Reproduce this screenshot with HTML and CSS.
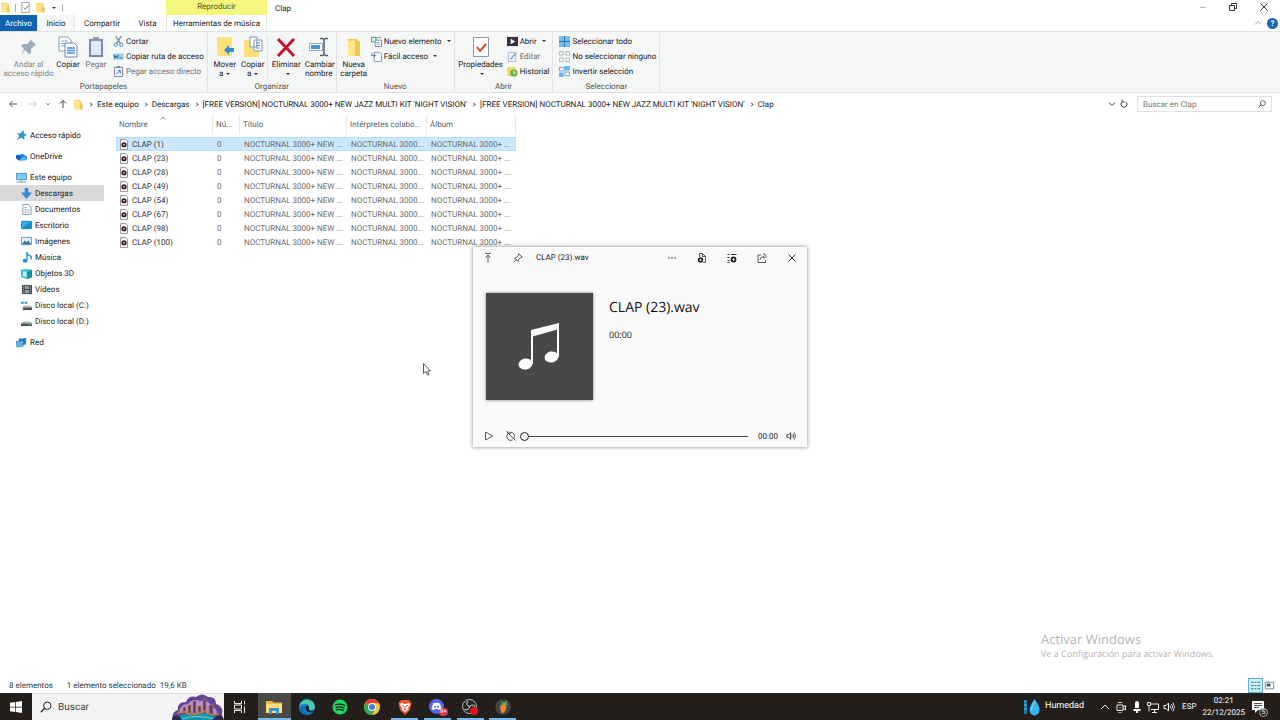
FILE: index.html
```html
<!DOCTYPE html>
<html lang="es">

<head>
  <meta charset="UTF-8">
  <title>Clap</title>
  <link rel="stylesheet" href="styles.css">
</head>

<body>

  <!-- shared icons -->
  <svg class="defs" aria-hidden="true">
    <symbol id="folder" viewBox="0 0 16 16">
      <path d="M2 1h8l1 2h2v12H2z" fill="#f6d560" />
      <path d="M2 3l8-1v13H2z" fill="#ffe68a" />
      <path d="M10 8h4v7h-4z" fill="#eec64a" />
    </symbol>
    <symbol id="pages" viewBox="0 0 20 22">
      <path d="M1 1h9l3 3v11H1z" fill="#fff" stroke="#8a9dbb" />
      <path d="M3 5h7M3 7.500h7M3 10h7" stroke="#7fa9de" />
      <path d="M7 7h9l3 3v11H7z" fill="#fff" stroke="#7087ad" />
      <path d="M9 12h8M9 14.500h8M9 17h8" stroke="#4f8edb" stroke-width="1.500" />
    </symbol>
    <symbol id="wav" viewBox="0 0 9 12">
      <path d="M.5.5h6l2 2v9h-8z" fill="#fff" stroke="#85808a" />
      <circle cx="4.500" cy="6.300" r="2.900" fill="#2a1720" />
      <circle cx="4.500" cy="6.300" r="1.100" fill="#e8b7c0" />
    </symbol>
    <symbol id="screen" viewBox="0 0 12 12">
      <path d="M.5 1.500h11v8H.5z" fill="#2fb1ee" stroke="#2187bd" />
      <path d="M1 9L11 2v7z" fill="#1787d6" />
    </symbol>
    <symbol id="drive" viewBox="0 0 12 12">
      <path d="M2 6h8l2 2H0z" fill="#b9bec1" />
      <path d="M0 8h12v3H0z" fill="#50565a" />
      <path d="M9 9.500h2" stroke="#7ee08a" />
    </symbol>
    <symbol id="speaker" viewBox="0 0 12 12">
      <path d="M1 4.500h2L5.500 2v8L3 7.500H1z" fill="none" stroke="currentColor" />
      <path d="M7 4.500q1 1.500 0 3M8.500 3q2.200 3 0 6M10 1.500q3 4.500 0 9" fill="none" stroke="currentColor" stroke-width=".8" />
    </symbol>
    <symbol id="lens" viewBox="0 0 12 12">
      <circle cx="7.300" cy="4.700" r="3.700" fill="none" stroke="currentColor" />
      <path d="M4.700 7.300L.8 11.200" stroke="currentColor" stroke-width="1.300" />
    </symbol>
    <symbol id="close" viewBox="0 0 10 10">
      <path d="M1.500 1.500l7 7M8.500 1.500l-7 7" stroke="currentColor" stroke-width=".9" />
    </symbol>
  </svg>

  <div class="explorer">
    <header class="titlebar">
      <div class="quick">
        <svg class="i11"><use href="#folder" /></svg>
        <span class="bar"></span>
        <svg class="i11" viewBox="0 0 12 12"><path d="M2 .5h8v11H2z" fill="#fff" stroke="#9a9a9a" /><path d="M4 6l2 2 3-4" fill="none" stroke="#666" /></svg>
        <svg class="i11"><use href="#folder" /></svg>
        <span class="caret"></span>
        <span class="bar"></span>
      </div>
      <div class="context">Reproducir</div>
      <div class="wtitle">Clap</div>
      <div class="winbuttons">
        <button aria-label="Minimizar"><svg class="i10" viewBox="0 0 10 10"><path d="M2 5.500h6" stroke="#bbb" /></svg></button>
        <button aria-label="Restaurar"><svg class="i10" viewBox="0 0 10 10"><path d="M1.500 3.500h5v5h-5zM3.500 3.500v-2h5v5h-2" fill="none" stroke="#333" /></svg></button>
        <button aria-label="Cerrar"><svg class="i10"><use href="#close" /></svg></button>
      </div>
    </header>

    <nav class="tabs">
      <button class="tab file">Archivo</button>
      <button class="tab active">Inicio</button>
      <button class="tab share">Compartir</button>
      <button class="tab view">Vista</button>
      <button class="tab music">Herramientas de música</button>
      <div class="help">
        <svg class="i8" viewBox="0 0 8 8"><path d="M1 5.500l3-3 3 3" fill="none" stroke="#aaa" /></svg>
        <button class="question" aria-label="Ayuda">?</button>
      </div>
    </nav>

    <section class="ribbon">
      <div class="group">
        <div class="tools">
          <button class="big wide off">
            <svg viewBox="0 0 20 22"><path d="M11 3l6 6-2 1-3 3v4l-2 1-4-4-4 5 3-6-3-3 2-2h4l3-3z" fill="#9eabb8" /></svg>
            Andar al<br>acceso rápido
          </button>
          <button class="big"><svg><use href="#pages" /></svg>Copiar</button>
          <button class="big dim">
            <svg viewBox="0 0 20 22"><path d="M3 3h14v18H3z" fill="#7789b0" /><path d="M5 5h10v14H5z" fill="#dfe9fa" /><path d="M7 1h6v4H7z" fill="#939ba8" /></svg>
            Pegar
          </button>
          <div class="small">
            <button><svg viewBox="0 0 12 12"><path d="M3 0l5 8M9 0L4 8" stroke="#70879b" stroke-width="1.300" /><circle cx="3" cy="9.500" r="1.800" fill="none" stroke="#2e7fc7" /><circle cx="9" cy="9.500" r="1.800" fill="none" stroke="#2e7fc7" /></svg>Cortar</button>
            <button><svg viewBox="0 0 12 12"><path d="M0 2.500h12v7H0z" fill="#a7d5f4" /><path d="M1 4l1 4 1.500-3L5 8l1-4M7 7.500h3" fill="none" stroke="#24537e" /></svg>Copiar ruta de acceso</button>
            <button class="dim"><svg viewBox="0 0 12 12"><path d="M1.500 1.500h9v10h-9z" fill="#eef3fc" stroke="#6f83ac" /><path d="M4 0h4v2H4z" fill="#8791a5" /><path d="M4 9l4-4M5 5h3v3" fill="none" stroke="#5570a5" /></svg>Pegar acceso directo</button>
          </div>
        </div>
        <div class="caption">Portapapeles</div>
      </div>

      <div class="group">
        <div class="tools">
          <button class="big">
            <svg viewBox="0 0 20 22"><path d="M2 1h15v19H2z" fill="#ffe17a" /><path d="M19 12h-5V9l-5 5 5 5v-3h5z" fill="#3290cf" /></svg>
            Mover<br>a<span class="caret"></span>
          </button>
          <button class="big">
            <svg viewBox="0 0 20 22"><path d="M1 4h15v17H1z" fill="#ffe17a" /><path d="M7 1h7v10H7zM11 4h8v11h-8z" fill="#fff" stroke="#8293b5" /><path d="M13 7h4M13 9.500h4M13 12h4" stroke="#5c93d8" /></svg>
            Copiar<br>a<span class="caret"></span>
          </button>
          <button class="big delete">
            <svg viewBox="0 0 20 22"><path d="M2 3l16 17M18 3L2 20" stroke="#c4122d" stroke-width="3" /></svg>
            Eliminar<br><span class="caret"></span>
          </button>
          <button class="big">
            <svg viewBox="0 0 20 22"><path d="M.5 7.500h13v7H.5z" fill="#fff" stroke="#9aa9b5" /><path d="M2 9h9v4H2z" fill="#3796dd" /><path d="M11 2.500h2.500l1.500 1 1.500-1H19M11 19.500h2.500l1.500-1 1.500 1H19M15 3v16" fill="none" stroke="#555e68" stroke-width="1.500" /></svg>
            Cambiar<br>nombre
          </button>
        </div>
        <div class="caption">Organizar</div>
      </div>

      <div class="group">
        <div class="tools">
          <button class="big">
            <svg viewBox="0 0 20 22"><path d="M4 3h9l1 2h2v15H4z" fill="#f0ca4c" /><path d="M4 5l7-1v16H4z" fill="#ffe68a" /></svg>
            Nueva<br>carpeta
          </button>
          <div class="small">
            <button><svg viewBox="0 0 12 12"><path d="M.5 1.500h5v5h-5z" fill="#e6f3ef" stroke="#45907c" /><path d="M6 1.500h5M4.500 4.500h7v7h-7z" fill="#fff" stroke="#73879a" /><path d="M6 7h4M6 9h4" stroke="#7aaedd" /></svg>Nuevo elemento<span class="caret"></span></button>
            <button><svg viewBox="0 0 12 12"><path d="M3.500 1.500h6l2 2v8h-8z" fill="#fff" stroke="#8290a8" /><path d="M0 5h5M3 3l2 2-2 2M1 2v2" fill="none" stroke="#5479ad" /></svg>Fácil acceso<span class="caret"></span></button>
          </div>
        </div>
        <div class="caption">Nuevo</div>
      </div>

      <div class="group">
        <div class="tools">
          <button class="big props">
            <svg viewBox="0 0 20 22"><path d="M2.500 1.500h15v19h-15z" fill="#fff" stroke="#8e959d" /><path d="M6 11l3 4 6-7" fill="none" stroke="#d7472c" stroke-width="2" /></svg>
            Propiedades<br><span class="caret"></span>
          </button>
          <div class="small">
            <button><svg viewBox="0 0 12 12"><path d="M0 1h12v10H0z" fill="#3b3042" /><path d="M4 3l5 3-5 3z" fill="#fff" /></svg>Abrir<span class="caret"></span></button>
            <button class="dim"><svg viewBox="0 0 12 12"><path d="M1.500 1.500h8v10h-8z" fill="#f1f4fb" stroke="#a9b8d4" /><path d="M4 9l6-7" stroke="#8fa8d6" stroke-width="2" /></svg>Editar</button>
            <button><svg viewBox="0 0 12 12"><path d="M0 1h9v10H0z" fill="#f4db62" /><circle cx="7.500" cy="7.500" r="4" fill="#66b24a" /><path d="M7.500 5v3h2" fill="none" stroke="#fff" /></svg>Historial</button>
          </div>
        </div>
        <div class="caption">Abrir</div>
      </div>

      <div class="group">
        <div class="tools">
          <div class="small">
            <button><svg viewBox="0 0 12 12"><path d="M0 0h12v12H0z" fill="#76bdf0" /><path d="M6 0v12M0 6h12" stroke="#226fa8" /></svg>Seleccionar todo</button>
            <button><svg viewBox="0 0 12 12"><path d="M.5.5h4v4h-4zM7.500.5h4v4h-4zM.5 7.500h4v4h-4zM7.500 7.500h4v4h-4z" fill="none" stroke="#b7b7b7" /></svg>No seleccionar ninguno</button>
            <button><svg viewBox="0 0 12 12"><path d="M.5 1.500h5v4h-5zM6.500 6.500h5v4h-5z" fill="#fff" stroke="#5a9bcc" /><path d="M6 0h6v5H6zM0 7h5v5H0z" fill="#69b5ec" /></svg>Invertir selección</button>
          </div>
        </div>
        <div class="caption">Seleccionar</div>
      </div>
    </section>

    <div class="address">
      <div class="arrows">
        <button aria-label="Atrás"><svg class="i10" viewBox="0 0 10 10"><path d="M9 5H1.500M4.500 2l-3 3 3 3" fill="none" stroke="#555" /></svg></button>
        <button aria-label="Adelante"><svg class="i10" viewBox="0 0 10 10"><path d="M1 5h7.500M5.500 2l3 3-3 3" fill="none" stroke="#ccc" /></svg></button>
        <button class="recent" aria-label="Recientes"><svg class="i8" viewBox="0 0 8 8"><path d="M2 3l2 2 2-2" fill="none" stroke="#888" /></svg></button>
        <button aria-label="Subir"><svg class="i10" viewBox="0 0 10 10"><path d="M5 9V1.500M2 4.500l3-3 3 3" fill="none" stroke="#444" /></svg></button>
      </div>
      <div class="crumbs">
        <svg class="i11"><use href="#folder" /></svg>
        <i></i><a href="#">Este equipo</a>
        <i></i><a href="#">Descargas</a>
        <i></i><a href="#">[FREE VERSION] NOCTURNAL 3000+ NEW JAZZ MULTI KIT 'NIGHT VISION'</a>
        <i></i><a href="#">[FREE VERSION] NOCTURNAL 3000+ NEW JAZZ MULTI KIT 'NIGHT VISION'</a>
        <i></i><a href="#">Clap</a>
      </div>
      <button class="drop" aria-label="Ubicaciones anteriores"><svg class="i8" viewBox="0 0 8 8"><path d="M1 2.500l3 3 3-3" fill="none" stroke="#444" /></svg></button>
      <button class="reload" aria-label="Actualizar"><svg class="i10" viewBox="0 0 10 10"><path d="M3 3a3 3 0 1 0 4 0M3 .5V3h2.500" fill="none" stroke="#444" /></svg></button>
      <label class="search">
        <input type="text" placeholder="Buscar en Clap" aria-label="Buscar en Clap">
        <svg class="i8"><use href="#lens" /></svg>
      </label>
    </div>

    <main class="content">
      <ul class="tree">
        <li class="root"><a href="#"><svg viewBox="0 0 12 12"><path d="M8 0l1 4 3 1-3 2v4L6 8.500 2 10l1.500-3.500L1 4l4-.5z" fill="#2d96d3" /><path d="M4 8l-3 3" stroke="#777" /></svg>Acceso rápido</a></li>
        <li class="root"><a href="#"><svg viewBox="0 0 12 12"><path d="M3 10a3 3 0 0 1 0-5 4 4 0 0 1 6.500 0A2.500 2.500 0 0 1 10 10z" fill="#1b84dc" /><path d="M0 8a2.500 2.500 0 0 1 4-3l3 5H2.500z" fill="#1361bd" /><path d="M5 8q3-3 6-1a2 2 0 0 1-1 3H4z" fill="#4db5f2" /></svg>OneDrive</a></li>
        <li class="root"><a href="#"><svg viewBox="0 0 12 12"><path d="M.5 1.500h11v7H.5z" fill="#76cff4" stroke="#4d92b9" /><path d="M1 11h10M6 9v2" stroke="#7395a9" /></svg>Este equipo</a>
          <ul>
            <li><a href="#" class="current"><svg viewBox="0 0 12 12"><path d="M4 0h4v5h4l-6 7-6-7h4z" fill="#3889d0" /></svg>Descargas</a></li>
            <li><a href="#"><svg viewBox="0 0 12 12"><path d="M2 .5h6l3 3v8H2z" fill="#fff" stroke="#8296a8" /><path d="M4 4h2M4 6.500h2M4 9h2M7 6.500h2M7 9h2" stroke="#4c83ab" /></svg>Documentos</a></li>
            <li><a href="#"><svg><use href="#screen" /></svg>Escritorio</a></li>
            <li><a href="#"><svg viewBox="0 0 12 12"><path d="M.5 1.500h11v8H.5z" fill="#dff3ff" stroke="#5f8fb3" /><path d="M1 9l3-4 2 2 2-2 3 4z" fill="#2d6fa6" /></svg>Imágenes</a></li>
            <li><a href="#"><svg viewBox="0 0 12 12"><path d="M6.500 9V0q0 3 3 4t1 4" fill="none" stroke="#1f94da" stroke-width="1.500" /><ellipse cx="4.500" cy="9.500" rx="2.700" ry="2.200" fill="#1f94da" /></svg>Música</a></li>
            <li><a href="#"><svg viewBox="0 0 12 12"><path d="M0 2l6-1 6 1v8l-6 2-6-2z" fill="#39bfcc" /><path d="M2 3.500l4 .5v6l-4-1z" fill="#b8f0f2" /><path d="M7 4l5-2v8l-5 2z" fill="#168e9e" /></svg>Objetos 3D</a></li>
            <li><a href="#"><svg viewBox="0 0 12 12"><path d="M1 1h11v10H1z" fill="#3d4347" /><path d="M4 2h5v3.500H4zM4 6.500h5V10H4z" fill="#8aa0ad" /><path d="M2.500 1v10M10.500 1v10" stroke="#ddd" stroke-dasharray="1 1" /></svg>Vídeos</a></li>
            <li><a href="#"><svg viewBox="0 0 12 12"><path d="M3 6h7l2 2H2z" fill="#b9bec1" /><path d="M2 8h10v3H2z" fill="#50565a" /><path d="M0 2h3v2H0zM4 2h3v2H4z" fill="#25a4b4" /></svg>Disco local (C:)</a></li>
            <li><a href="#"><svg><use href="#drive" /></svg>Disco local (D:)</a></li>
          </ul>
        </li>
        <li class="root net"><a href="#"><svg viewBox="0 0 12 12"><path d="M3 2l8-1v7l-8 2z" fill="#2c80bd" /><path d="M0 5l8-1v6l-7 1z" fill="#5cb3e6" stroke="#2c719f" stroke-width=".6" /></svg>Red</a></li>
      </ul>

      <div class="files">
        <table>
          <colgroup><col class="c1"><col class="c2"><col class="c3"><col class="c4"><col class="c5"></colgroup>
          <thead>
            <tr>
              <th class="sorted"><svg class="sort" viewBox="0 0 6 4"><path d="M.5 3.500l2.500-2.500 2.500 2.500" fill="none" stroke="#777" stroke-width=".8" /></svg><span>Nombre</span></th>
              <th><span>Nú...</span></th>
              <th><span>Título</span></th>
              <th><span>Intérpretes colabo...</span></th>
              <th><span>Álbum</span></th>
            </tr>
          </thead>
          <tbody id="rows">
          </tbody>
        </table>
      </div>
    </main>

    <footer class="status">
      <span>8 elementos</span>
      <span class="sel">1 elemento seleccionado</span>
      <span>19,6 KB</span>
      <div class="views">
        <button class="on" aria-label="Detalles"><svg viewBox="0 0 14 14"><path d="M2 3.500h3M2 7h3M2 10.500h3M6 3.500h2M6 7h2M6 10.500h2M9 3.500h3M9 7h3M9 10.500h3" stroke="#3a7186" /></svg></button>
        <button aria-label="Iconos grandes"><svg viewBox="0 0 14 14"><path d="M2.500 3.500h9v7h-9z" fill="#fff" stroke="#7185a0" /><path d="M4 5h4v3H4z" fill="#2b5277" /></svg></button>
      </div>
    </footer>
  </div>

  <div class="player">
    <div class="ptop">
      <button aria-label="Minimizar"><svg class="i10" viewBox="0 0 10 10"><path d="M5 10V2.500M2.500 4.500L5 2l2.500 2.500M2 .5h6" fill="none" stroke="#333" stroke-width=".8" /></svg></button>
      <button aria-label="Anclar"><svg class="i10" viewBox="0 0 10 10"><path d="M6 .8L9.200 4l-2 .8-1.700 1.700L5 8.500 1.500 5l2-.5L5.200 2.800zM3.300 6.700L.5 9.500" fill="none" stroke="#333" stroke-width=".8" /></svg></button>
      <span class="ptitle">CLAP (23).wav</span>
      <button aria-label="Más"><svg class="i10" viewBox="0 0 10 10"><path d="M1 5h1.500M4.200 5h1.500M7.500 5H9" stroke="#222" stroke-width="1.200" /></svg></button>
      <button aria-label="Añadir archivo"><svg class="i10" viewBox="0 0 10 10"><path d="M2.500 4V.5h3l3 3v6H6M5.500.5v3h3" fill="none" stroke="#333" stroke-width=".8" /><circle cx="3.500" cy="7" r="2.700" fill="#222" /><path d="M2.200 7h2.600M3.500 5.700v2.600" stroke="#fff" stroke-width=".7" /></svg></button>
      <button aria-label="Añadir a lista"><svg class="i10" viewBox="0 0 10 10"><path d="M.5 1.500h2M4 1.500h5.500M.5 4.500h2M.5 7.500h2M.5 9.500h2" stroke="#333" /><circle cx="6.500" cy="6.500" r="2.900" fill="#222" /><path d="M5 6.500h3M6.500 5v3" stroke="#fff" stroke-width=".7" /></svg></button>
      <button aria-label="Compartir"><svg class="i10" viewBox="0 0 10 10"><path d="M4 2H1v7.500h7.500V7M3 7q0-3.500 4-3.500V5.500L9.500 3 7 .5v2" fill="none" stroke="#333" stroke-width=".8" /></svg></button>
      <button aria-label="Cerrar"><svg class="i10"><use href="#close" /></svg></button>
    </div>
    <div class="pmain">
      <div class="art">
        <svg viewBox="0 0 44 50"><path d="M13 8L41 1v6L13 15z" fill="#fff" /><path d="M14 9v33M40 3v32" stroke="#fff" stroke-width="2" /><ellipse cx="7.500" cy="42" rx="7" ry="5.500" fill="#fff" transform="rotate(-12 7.500 42)" /><ellipse cx="33.500" cy="35" rx="7" ry="5.500" fill="#fff" transform="rotate(-12 33.500 35)" /></svg>
      </div>
      <div>
        <h1>CLAP (23).wav</h1>
        <p>00:00</p>
      </div>
    </div>
    <div class="pcontrols">
      <button aria-label="Reproducir"><svg class="i10" viewBox="0 0 10 10"><path d="M1.500 1l7 4-7 4z" fill="none" stroke="#333" stroke-width=".8" /></svg></button>
      <button class="loop" aria-label="Repetir"><svg class="i10" viewBox="0 0 10 10"><path d="M3.500 1.500A4 4 0 0 1 8 7.500M6.500 9A4 4 0 0 1 2 2.500M2 0v2.500h2.500M.5.5l9 9" fill="none" stroke="#333" stroke-width=".8" /></svg></button>
      <input type="range" min="0" max="100" value="0" aria-label="Posición">
      <span>00:00</span>
      <button aria-label="Volumen"><svg class="i10"><use href="#speaker" /></svg></button>
    </div>
  </div>

  <svg class="cursor" viewBox="0 0 8 13"><path d="M.5.5v10l2.300-2 1.700 3.700 1.500-.7L4.500 8h3z" fill="#fff" stroke="#333" stroke-width=".8" /></svg>

  <div class="watermark">
    <strong>Activar Windows</strong>
    <span>Ve a Configuración para activar Windows.</span>
  </div>

  <div class="taskbar">
    <button class="start" aria-label="Inicio"><svg viewBox="0 0 12 12"><path d="M0 1.800L5.300 1v4.700H0zM6 .9L12 0v5.700H6zM0 6.400h5.300v4.700L0 10.300zM6 6.400h6V12l-6-.9z" fill="#fff" /></svg></button>
    <label class="tsearch">
      <svg class="lens"><use href="#lens" /></svg>
      <input type="text" placeholder="Buscar" aria-label="Buscar">
      <svg class="city" viewBox="0 0 52 26">
        <path d="M1 26q-2-8 5-10-1-8 8-8 3-7 10-5 6-5 12 0 8-1 8 7 8 3 6 10l1 6z" fill="#5f4796" />
        <path d="M7 19q1-9 9-9 5-6 12-3 9-1 11 5 6 2 6 8z" fill="#b98ad6" />
        <path d="M11 20v-7h3v7M16 20v-9h3v9M21 20V7h3v13M26 20v-8h3v8M31 20V5h3v15M37 20v-9h4v9" fill="#4f4468" stroke="#d07a50" stroke-width=".7" />
        <path d="M3 26q3-7 22-7t24 7z" fill="#1a91a8" />
        <path d="M10 25q15-5 32 0" fill="none" stroke="#66d5d5" />
        <path d="M5 20q5-4 10-1t12 0 10 0 10 1" fill="none" stroke="#c77545" stroke-width="1.500" />
        <path d="M0 26q0-6 7-4l3 4zM52 26q-1-6-8-4l-4 4z" fill="#2d2657" />
      </svg>
    </label>
    <button class="tview" aria-label="Vista de tareas"><svg viewBox="0 0 12 12"><path d="M.5 0v2.500h7V0M.5 12V9.500h7V12M.5 4h7v4h-7zM10.500 0v3.500M10.500 5.500V12" fill="none" stroke="#eee" /></svg></button>

    <div class="apps">
      <button class="app front" aria-label="Explorador"><svg viewBox="0 0 16 16"><path d="M0 2h6l1.500 1.500H16V14H0z" fill="#e9b94a" /><path d="M0 5h16v9H0z" fill="#ffdd78" /><path d="M3 15V9h10v6h-3v-3H6v3z" fill="#3d93d8" /></svg></button>
      <button class="app" aria-label="Edge"><svg viewBox="0 0 16 16"><circle cx="8" cy="8" r="8" fill="#1684cf" /><path d="M1 5A8 8 0 0 1 16 8q-1 4-5 3-2-1-1-3-1-4-5-3-3 0-4 2z" fill="#49c9a8" /><path d="M6 7q-2 5 3 8-7 1-8.500-6Q3 5 6 7z" fill="#126dbc" /><path d="M7 7q3-1 3 1-1 2 0 3 2 2 5 0l1 0q-4 4-7.500 1.500Q5.500 10 7 7z" fill="#201e1c" /></svg></button>
      <button class="app" aria-label="Spotify"><svg viewBox="0 0 16 16"><circle cx="8" cy="8" r="7.500" fill="#1ed760" /><path d="M3.500 5.700q5-1.500 9.300.8M4 8.300q4-1.200 8 .7M4.500 10.700q3.500-1 6.700.7" fill="none" stroke="#181818" stroke-width="1.300" stroke-linecap="round" /></svg></button>
      <button class="app" aria-label="Chrome"><svg viewBox="0 0 16 16"><circle cx="8" cy="8" r="8" fill="#f7cd2e" /><path d="M8 8L1.100 4A8 8 0 0 1 15 4.200H8z" fill="#e4402f" /><path d="M8 8L1.100 4A8 8 0 0 0 8 16l3.500-6z" fill="#35a452" /><circle cx="8" cy="8" r="4" fill="#fff" /><circle cx="8" cy="8" r="3" fill="#3c7de6" /></svg></button>
      <button class="app run" aria-label="Brave"><svg viewBox="0 0 16 16"><path d="M4 1h8l2.500 3-1.500 7-5 5-5-5L1.500 4z" fill="#f4512c" /><path d="M4 4l4 1 4-1 1 2-2 3 .5 1.500L8 13l-3.500-2.500L5 9 3 6z" fill="#fff" /><path d="M5 6.500l2 .8M11 6.500l-2 .8M8 7v3M6.500 10L8 11l1.500-1" fill="none" stroke="#f4512c" /></svg></button>
      <button class="app run" aria-label="Discord"><svg viewBox="0 0 16 16"><circle cx="7.500" cy="7.500" r="7.500" fill="#5564e8" /><path d="M4 4.500q3.500-1.500 7 0l1.500 5.500q-1 1-3 1L9 10H6l-.5 1q-2 0-3-1z" fill="#fff" /><circle cx="6" cy="8" r="1" fill="#5564e8" /><circle cx="9" cy="8" r="1" fill="#5564e8" /></svg><span class="count">9+</span></button>
      <button class="app run" aria-label="OBS"><svg viewBox="0 0 16 16"><circle cx="7.500" cy="7.500" r="7" fill="#26262a" stroke="#ddd" stroke-width=".8" /><path d="M7.500 7.500Q3 6 6 2M7.500 7.500Q12 4 13 8.500M7.500 7.500Q7 12 2.500 10.500" fill="none" stroke="#ddd" /><circle cx="12" cy="12" r="4" fill="#df1118" /></svg></button>
      <button class="app run" aria-label="FL Studio"><svg viewBox="0 0 16 16"><circle cx="8" cy="8" r="7.800" fill="#454545" /><path d="M5.500 6q4-2 6 1 0 5-4 7.500-3-2-2-8.500z" fill="#f08c25" /><path d="M8 6L6 2l3 2 3-3-.5 4 1.500 1z" fill="#61b944" /></svg></button>
    </div>

    <div class="tray">
      <button class="weather"><svg viewBox="0 0 18 18"><path d="M1 3h3v13H1z" fill="#1379b5" /><path d="M1 3h3M1 7h3M1 11h3" stroke="#55c7f2" /><path d="M11.500 1q6 8 5 11.500a5 5 0 0 1-10 0Q6 9 11.500 1z" fill="#38b2ec" /><path d="M11.500 4q-3 5-3 8" fill="none" stroke="#95def9" /></svg>Humedad</button>
      <button class="ico" aria-label="Mostrar iconos ocultos"><svg viewBox="0 0 12 12"><path d="M2 8l4-4 4 4" fill="none" stroke="#eee" /></svg></button>
      <button class="ico" aria-label="Reunirse"><svg viewBox="0 0 12 12"><path d="M2 4h6v5.500H2zM8 6l2.500-1.500V9L8 7.500M3 1.500h4M3 12h4M5 6v1.500" fill="none" stroke="#eee" /></svg></button>
      <button class="ico" aria-label="Micrófono"><svg viewBox="0 0 12 12"><path d="M4 2a2 2 0 0 1 4 0v5H4z" fill="#fff" /><path d="M2.500 8h7v2h-7zM5 10h2v2H5z" fill="#fff" /></svg></button>
      <button class="ico" aria-label="Red"><svg viewBox="0 0 12 12"><path d="M4 3h7.500v5.500H4M5 11.500h5M7.500 9v2M.5 1.500h3v3h-3zM2 4.500v6" fill="none" stroke="#eee" /></svg></button>
      <button class="ico" aria-label="Volumen"><svg><use href="#speaker" /></svg></button>
      <button class="lang">ESP</button>
      <button class="clock">02:21<br>22/12/2025</button>
      <button class="notif" aria-label="Notificaciones"><svg viewBox="0 0 12 12"><path d="M0 0h12v9H6l-3 3V9H0z" fill="#fff" /><path d="M2 2.500h8M2 4.500h8M2 6.500h5" stroke="#2a211c" stroke-width=".8" /></svg><span>5</span></button>
    </div>
  </div>

  <script>
    const names = [1, 23, 28, 49, 54, 67, 98, 100];
    const rows = document.getElementById("rows");

    names.forEach((n, i) => {
      rows.innerHTML += `<tr${i === 0 ? ' class="selected"' : ''}>
        <td class="name"><svg><use href="#wav" /></svg>CLAP (${n})</td>
        <td>0</td>
        <td>NOCTURNAL 3000+ NEW ...</td>
        <td>NOCTURNAL 3000...</td>
        <td>NOCTURNAL 3000+ ...</td>
      </tr>`;
    });
  </script>

</body>

</html>
```
FILE: styles.css
```css
* {
  box-sizing: border-box;
}

body {
  margin: 0;
  min-height: 100vh;
  display: flex;
  flex-direction: column;
  position: relative;
  background: #fff;
  color: #222;
  font-family: Roboto, "Open Sans", sans-serif;
  font-size: 8px;
  line-height: 11px;
  text-rendering: geometricPrecision;
}

button {
  padding: 0;
  border: 0;
  background: none;
  color: inherit;
  font: inherit;
  text-rendering: inherit;
}

a {
  color: inherit;
  text-decoration: none;
}

input {
  min-width: 0;
  border: 0;
  background: none;
  font: inherit;
  text-rendering: inherit;
}

svg {
  display: block;
  flex: none;
}

.defs {
  position: absolute;
  width: 0;
  height: 0;
}

.i8 {
  width: 8px;
  height: 8px;
}

.i10 {
  width: 10px;
  height: 10px;
}

.i11 {
  width: 11px;
  height: 11px;
}

.caret {
  display: inline-block;
  margin-left: 3px;
  border: 2px solid transparent;
  border-top-color: #333;
  border-bottom: 0;
  vertical-align: middle;
}

.explorer {
  flex: 1;
  display: flex;
  flex-direction: column;
}

/* title bar */

.titlebar {
  display: flex;
  height: 15px;
}

.quick {
  width: 166px;
  display: flex;
  align-items: center;
  gap: 4px;
}

.bar {
  width: 1px;
  height: 8px;
  background: #a5b0bb;
}

.quick .caret {
  margin: 0 2px;
}

.context {
  width: 101px;
  background: #f5f77c;
  color: #55552a;
  text-align: center;
  line-height: 14px;
}

.wtitle {
  margin-left: 8px;
  line-height: 17px;
}

.winbuttons {
  margin-left: auto;
  display: flex;
}

.winbuttons button {
  width: 30px;
  height: 14px;
  display: flex;
  align-items: center;
  justify-content: center;
}

.winbuttons button:last-child {
  width: 32px;
}

/* ribbon */

.tabs {
  display: flex;
  height: 16px;
}

.tab {
  line-height: 17px;
}

.tab.file {
  width: 37px;
  background: #0f63b0;
  color: #fff;
}

.tab.active {
  width: 38px;
  background: #f5f6f7;
  border: 1px solid #e3e5e7;
  border-width: 0 1px;
}

.tab.share {
  width: 54px;
}

.tab.view {
  width: 37px;
}

.tab.music {
  width: 101px;
  border: solid #e5e5e0;
  border-width: 0 1px;
}

.help {
  margin-left: auto;
  display: flex;
  align-items: center;
  gap: 5px;
  padding-right: 2px;
}

.question {
  width: 11px;
  height: 11px;
  border-radius: 50%;
  background: #1565b8;
  color: #fff;
  font-weight: bold;
}

.ribbon {
  display: flex;
  height: 62px;
  background: #f5f7f7;
  border: solid #e0e3e4;
  border-width: 1px 0;
}

.group {
  display: flex;
  flex-direction: column;
  justify-content: space-between;
  padding: 3px 3px 0;
  border-right: 1px solid #e0e2e4;
}

.tools {
  display: flex;
}

.big {
  width: 28px;
  display: flow-root;
  text-align: center;
  line-height: 9px;
  align-self: flex-start;
  white-space: nowrap;
}

.big svg {
  width: 20px;
  height: 22px;
  margin: 1px auto 2px;
}

.big.wide {
  width: 51px;
}

.big.props {
  width: 46px;
}

.big.delete {
  width: 38px;
  border-left: 1px solid #e0e2e4;
}

.off {
  color: #858585;
}

.dim {
  color: #707070;
}

.small {
  display: flex;
  flex-direction: column;
  gap: 3px;
  padding-left: 3px;
}

.small button {
  display: flex;
  align-items: center;
  gap: 2px;
  height: 12px;
  white-space: nowrap;
}

.small svg {
  width: 11px;
  height: 11px;
}

.caption {
  text-align: center;
  color: #555;
}

/* address bar */

.address {
  display: flex;
  align-items: center;
  height: 22px;
  padding: 0 8px;
}

.arrows {
  display: flex;
  align-items: center;
  gap: 10px;
  width: 65px;
}

.arrows .recent {
  margin: 0 -4px;
}

.crumbs {
  flex: 1;
  display: flex;
  align-items: center;
  gap: 5px;
  white-space: nowrap;
}

.crumbs i {
  width: 3px;
  height: 3px;
  border: solid #666;
  border-width: 1px 1px 0 0;
  transform: rotate(45deg);
}

.reload {
  margin: 0 8px 0 3px;
}

.search {
  width: 135px;
  height: 16px;
  display: flex;
  align-items: center;
  padding: 0 5px;
  border: 1px solid #e0e0e0;
}

.search input {
  flex: 1;
  padding: 0;
}

.search input::placeholder {
  color: #777;
}

/* content */

.content {
  flex: 1;
  display: flex;
}

.tree,
.tree ul {
  margin: 0;
  padding: 0;
  list-style: none;
}

.tree {
  width: 104px;
  padding-top: 12px;
}

.tree a {
  height: 16px;
  display: flex;
  align-items: center;
  gap: 3px;
  padding-left: 16px;
}

.tree ul a {
  padding-left: 21px;
}

.tree svg {
  width: 11px;
  height: 11px;
}

.tree .root {
  margin-bottom: 5px;
}

.tree .current {
  background: #d9d9d9;
}

.files {
  flex: 1;
  padding-left: 12px;
}

table {
  width: 400px;
  table-layout: fixed;
  border-collapse: collapse;
}

.c1 {
  width: 97px;
}

.c2 {
  width: 27px;
}

.c3 {
  width: 107px;
}

.c4 {
  width: 80px;
}

th {
  padding: 0 0 3px;
  font-weight: normal;
  text-align: left;
  color: #58626e;
}

th span {
  display: block;
  padding-left: 3px;
  line-height: 19px;
  border-right: 1px solid #e8e8e8;
}

.sorted {
  position: relative;
}

.sort {
  position: absolute;
  left: 44px;
  top: 1px;
  width: 6px;
  height: 4px;
}

td {
  height: 14px;
  padding: 0 0 0 4px;
  color: #6a6a6a;
  white-space: nowrap;
}

td.name {
  display: flex;
  align-items: center;
  gap: 4px;
  color: #333;
}

.name svg {
  width: 8px;
  height: 11px;
}

.selected {
  background: #cce8ff;
  outline: 1px solid #b5dcf8;
  outline-offset: -1px;
}

/* status bar */

.status {
  display: flex;
  align-items: center;
  height: 16px;
  padding: 0 2px 0 9px;
  color: #2a3a4a;
}

.status .sel {
  margin: 0 4px 0 14px;
}

.views {
  margin-left: auto;
  display: flex;
}

.views button {
  width: 15px;
  height: 15px;
}

.views svg {
  width: 13px;
  height: 13px;
}

.views .on {
  background: #c9eef7;
  border: 1px solid #5bb5cf;
}

/* media player */

.player {
  position: absolute;
  left: 473px;
  top: 247px;
  width: 334px;
  height: 200px;
  display: flex;
  flex-direction: column;
  background: #fafafa;
  box-shadow: 0 0 4px rgba(0, 0, 0, 0.5);
}

.ptop {
  display: flex;
  align-items: center;
  height: 21px;
}

.ptop button {
  width: 30px;
  display: flex;
  justify-content: center;
}

.ptitle {
  flex: 1;
  padding-left: 3px;
}

.pmain {
  flex: 1;
  display: flex;
  gap: 16px;
  padding: 25px 13px 0;
  color: #111;
  font-family: "Open Sans", sans-serif;
}

.art {
  width: 107px;
  height: 107px;
  display: flex;
  align-items: center;
  justify-content: center;
  background: #484848;
  box-shadow: 0 0 3px rgba(0, 0, 0, 0.5);
}

.art svg {
  width: 44px;
  height: 50px;
}

.pmain h1 {
  margin: 6px 0 12px;
  font-size: 14px;
  font-weight: normal;
  line-height: 18px;
}

.pmain p {
  margin: 0;
  font-size: 9px;
  line-height: 12px;
}

.pcontrols {
  display: flex;
  align-items: center;
  height: 22px;
  padding: 0 11px;
}

.loop {
  margin: 0 4px 0 12px;
}

.pcontrols span {
  margin: 0 8px 0 10px;
}

input[type="range"] {
  flex: 1;
  height: 10px;
  margin: 0;
  appearance: none;
  background: linear-gradient(#444, #444) center / 100% 1px no-repeat;
}

input[type="range"]::-webkit-slider-thumb {
  appearance: none;
  width: 9px;
  height: 9px;
  border: 1px solid #222;
  border-radius: 50%;
  background: #fafafa;
}

.cursor {
  position: absolute;
  left: 423px;
  top: 363px;
  width: 8px;
  height: 13px;
}

.watermark {
  position: absolute;
  right: 56px;
  bottom: 60px;
  width: 183px;
  color: #b5b5b5;
  font-family: "Open Sans", sans-serif;
  white-space: nowrap;
}

.watermark strong {
  display: block;
  font-size: 13px;
  font-weight: normal;
  line-height: 17px;
}

.watermark span {
  font-size: 9px;
  line-height: 12px;
}

/* taskbar */

.taskbar {
  display: flex;
  height: 27px;
  background: #231f1d;
  color: #fff;
}

.start,
.tview {
  width: 32px;
  display: flex;
  align-items: center;
  justify-content: center;
}

.start svg,
.tview svg {
  width: 12px;
  height: 12px;
}

.tview {
  width: 34px;
  padding-right: 2px;
}

.tsearch {
  width: 192px;
  display: flex;
  align-items: center;
  background: #f3f3f3;
  border-top: 1px solid #ddd;
  color: #222;
}

.lens {
  width: 12px;
  height: 12px;
  margin: 0 6px 0 8px;
}

.tsearch input {
  flex: 1;
  padding: 0;
  font-size: 10px;
}

.tsearch input::placeholder {
  color: #444;
}

.city {
  width: 52px;
  height: 26px;
}

.apps {
  display: flex;
  width: 261px;
}

.app {
  position: relative;
  flex: 1;
  display: flex;
  align-items: center;
  justify-content: center;
}

.app svg {
  width: 16px;
  height: 16px;
}

.front {
  background: #4b4846;
  box-shadow: inset 0 -2px #76b9ed;
}

.run {
  background: linear-gradient(#76b9ed, #76b9ed) bottom / 27px 2px no-repeat;
}

.count {
  position: absolute;
  right: 6px;
  bottom: 4px;
  padding: 0 1px;
  border-radius: 4px;
  background: #d73a4c;
  font-size: 6px;
  line-height: 8px;
}

.tray {
  margin-left: auto;
  display: flex;
  align-items: center;
  padding-right: 16px;
}

.weather {
  display: flex;
  align-items: center;
  gap: 4px;
  margin-right: 13px;
  font-size: 9px;
  line-height: 13px;
}

.weather svg {
  width: 18px;
  height: 18px;
}

.ico {
  width: 16px;
}

.ico svg {
  width: 12px;
  height: 12px;
  margin: 0 auto;
}

.lang {
  margin: 0 6px 0 5px;
}

.clock {
  line-height: 12px;
}

.notif {
  position: relative;
  margin-left: 7px;
}

.notif svg {
  width: 12px;
  height: 12px;
}

.notif span {
  position: absolute;
  right: -4px;
  bottom: -4px;
  width: 9px;
  height: 9px;
  border: 1px solid #aaa;
  border-radius: 50%;
  background: #2a211c;
  font-size: 7px;
  line-height: 7px;
}
```
